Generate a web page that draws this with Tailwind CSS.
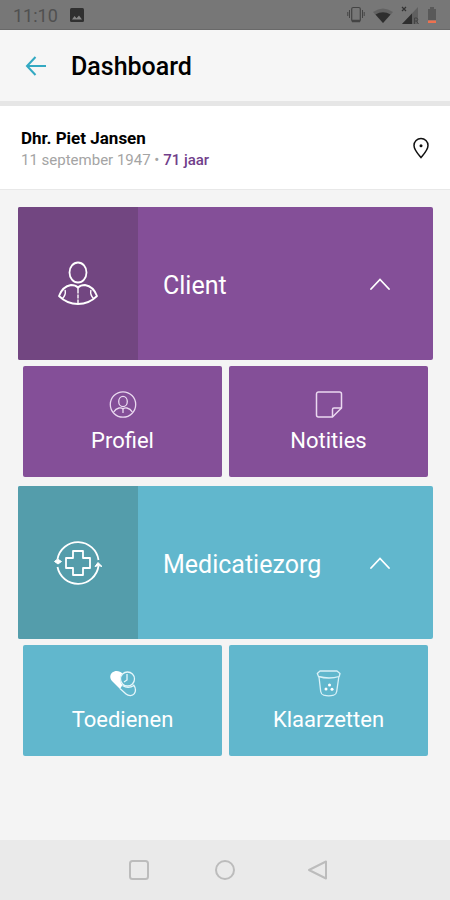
<!DOCTYPE html>
<html lang="nl">
<head>
<meta charset="utf-8">
<meta name="viewport" content="width=device-width, initial-scale=1">
<title>Dashboard</title>
<script src="https://cdn.jsdelivr.net/npm/@tailwindcss/browser@4"></script>
</head>
<body class="flex min-h-screen flex-col bg-[#f4f4f4] font-[Roboto,sans-serif] text-black">

  <!-- Status bar -->
  <div class="flex h-[30px] items-center justify-between border-b border-[#696969] bg-[#777777] px-[13px] text-[#505050]">
    <div class="flex items-center gap-3">
      <span class="pt-[2px] text-[18px] leading-5">11:10</span>
      <svg class="size-[14px]" viewBox="0 0 14 14" aria-hidden="true"><rect width="14" height="14" rx="1.5" fill="#303030"/><path d="M2 11.5 4.5 8l2 2.2L9 7.500l3 4z" fill="#858585"/></svg>
    </div>
    <div class="flex items-center gap-2">
      <svg class="h-[18px] w-[18px]" viewBox="0 0 18 18" fill="none" stroke="#444" aria-hidden="true"><rect x="4.700" y="1.500" width="8.600" height="14" rx="1.500" stroke-width="1.200"/><path d="M5 15h8" stroke-width="2.500"/><path d="M2.500 4v8M.8 6v4M15.500 4v8M17.200 6v4" stroke-width="1"/></svg>
      <svg class="h-[18px] w-5" viewBox="0 0 20 18" aria-hidden="true"><path d="M0 6Q10-1 20 6L10 17z" fill="#626262"/><path d="M2.500 8.500Q10 4 17.500 8.500L10 17z" fill="#2e2e2e"/></svg>
      <svg class="h-5 w-[18px]" viewBox="0 0 18 20" aria-hidden="true"><path d="M17 2v17H1z" fill="#606060"/><path d="M11 8.500V19H1z" fill="#2e2e2e"/><path d="m1 2 4 4m0-4L1 6" stroke="#333" stroke-width="1.200"/><path d="M13.500 19v-6h2.500q1.500 1.500 0 3h-2.500m2 0 2 3" fill="none" stroke="#454545"/></svg>
      <svg class="h-[18px] w-[10px]" viewBox="0 0 10 18" aria-hidden="true"><path d="M3 1h4v2h2v11H1V3h2z" fill="#595959"/><path d="M1 14.500h8V17H1z" fill="#ee714f"/></svg>
    </div>
  </div>

  <!-- App bar -->
  <header class="flex h-[76px] items-center gap-6 border-b-[5px] border-[#e6e6e6] bg-[#f6f6f6] pl-[25px]">
    <button type="button" aria-label="Terug" class="text-[#33a9c2]">
      <svg class="size-[22px]" viewBox="0 0 22 22" fill="none" stroke="currentColor" stroke-width="2" aria-hidden="true"><path d="M10.500 2 2 11l8.500 9M2 11h19"/></svg>
    </button>
    <h1 class="pt-[3px] text-[25px] leading-8 font-medium">Dashboard</h1>
  </header>

  <!-- Client summary -->
  <section class="flex h-[84px] items-center justify-between border-b border-[#e8e8e8] bg-white pr-5 pl-[21px]">
    <div>
      <h2 class="text-[17px] leading-6 font-bold">Dhr. Piet Jansen</h2>
      <p class="text-[15px] leading-5 text-[#a4a4a4]">11 september 1947 <span>•</span> <span class="font-medium text-[#71408a]">71 jaar</span></p>
    </div>
    <button type="button" aria-label="Locatie">
      <svg class="h-[22px] w-[18px]" viewBox="0 0 18 22" fill="none" stroke="#111" stroke-width="1.500" aria-hidden="true"><path d="M9 20.500C6.500 17.500 2 13 2 8.500a7 7 0 0 1 14 0C16 13 11.500 17.500 9 20.500z"/><circle cx="9" cy="8.700" r="1.500" fill="#111" stroke="none"/></svg>
    </button>
  </section>

  <main class="flex grow flex-col gap-[9px] px-[17px] pt-[17px] pl-[18px] text-white">
    <section>
      <button type="button" aria-expanded="true" class="flex h-[153px] w-full items-stretch rounded-xs bg-[#844f98] text-left">
        <span class="flex w-[120px] items-center justify-center rounded-l-xs bg-[#724681]">
          <svg class="size-12" viewBox="0 0 48 48" fill="none" stroke="#fff" stroke-width="1.800" stroke-linejoin="round" stroke-linecap="round" aria-hidden="true"><ellipse cx="24" cy="12.500" rx="8.500" ry="10"/><path d="M24 27.500c-1.500-1.500-4-2.500-7-2.500C11 26 7 30.500 5 36c5 5 11.500 8 19 8s14-3 19-8c-2-5.500-6-10-12-11-3 0-5.500 1-7 2.500z"/><path d="M24 28v5m0 2v3m0 2v3M8.500 38.500c2-2 3.200-5 2.700-8M39.500 38.500c-2-2-3.200-5-2.700-8" stroke-width="1.400"/></svg>
        </span>
        <span class="flex grow items-center justify-between pr-[43px] pl-[25px]">
          <span class="pt-1 text-[25px] leading-8">Client</span>
          <svg class="h-[14px] w-5" viewBox="0 0 20 14" fill="none" stroke="#fff" stroke-width="1.800" stroke-linecap="round" aria-hidden="true"><path d="m1 12 9-9.500 9 9.500"/></svg>
        </span>
      </button>
      <div class="mt-[6px] grid grid-cols-2 gap-[7px] px-[5px]">
        <button type="button" class="flex h-[111px] flex-col items-center justify-center gap-[7px] rounded-xs bg-[#844f98] pt-[3px]">
          <svg class="size-7" viewBox="0 0 28 28" fill="none" stroke="#ead9f0" stroke-width="1.300" aria-hidden="true"><circle cx="14" cy="14.500" r="12.700"/><ellipse cx="14" cy="11.500" rx="4.300" ry="5.200"/><path d="M14 19c-1-1-2.500-1.300-4-1-2.300.5-4 1.800-5.300 4M14 19c1-1 2.500-1.300 4-1 2.300.5 4 1.800 5.300 4M14 19v4"/></svg>
          <span class="text-[22px] leading-8">Profiel</span>
        </button>
        <button type="button" class="flex h-[111px] flex-col items-center justify-center gap-[7px] rounded-xs bg-[#844f98] pt-[3px]">
          <svg class="size-7" viewBox="0 0 28 28" fill="none" stroke="#ead9f0" stroke-width="1.500" stroke-linejoin="round" aria-hidden="true"><path d="M3.500 2h21a2 2 0 0 1 2 2v14l-9 9h-14a2 2 0 0 1-2-2V4a2 2 0 0 1 2-2z"/><path d="M17.500 27v-7.500A1.500 1.500 0 0 1 19 18h7.500"/></svg>
          <span class="text-[22px] leading-8">Notities</span>
        </button>
      </div>
    </section>

    <section>
      <button type="button" aria-expanded="true" class="flex h-[153px] w-full items-stretch rounded-xs bg-[#61b7cd] text-left">
        <span class="flex w-[120px] items-center justify-center rounded-l-xs bg-[#549dab]">
          <svg class="size-12" viewBox="0 0 48 48" fill="none" stroke="#fff" stroke-width="1.800" stroke-linejoin="round" aria-hidden="true"><path d="M3.500 20a20.800 20.800 0 0 1 41 1M44.500 27a20.800 20.800 0 0 1-41 1"/><path d="M19 12h10v7h7v10h-7v7H19v-7h-7V19h7z"/><path d="M.5 22.500 3.500 20l4 2.500L4 25zM41 27.500l3-4 4 4-3.500-1z" fill="#fff" stroke-width="1"/></svg>
        </span>
        <span class="flex grow items-center justify-between pr-[43px] pl-[25px]">
          <span class="pt-1 text-[25px] leading-8">Medicatiezorg</span>
          <svg class="h-[14px] w-5" viewBox="0 0 20 14" fill="none" stroke="#fff" stroke-width="1.800" stroke-linecap="round" aria-hidden="true"><path d="m1 12 9-9.500 9 9.500"/></svg>
        </span>
      </button>
      <div class="mt-[6px] grid grid-cols-2 gap-[7px] px-[5px]">
        <button type="button" class="flex h-[111px] flex-col items-center justify-center gap-[7px] rounded-xs bg-[#61b7cd] pt-[3px]">
          <svg class="size-7" viewBox="0 0 28 28" fill="none" stroke="#e6f6fa" stroke-width="1.300" aria-hidden="true"><path d="M13.500 4.500C11 1.500 6 1 3.200 3.500.5 6 .8 9.500 3 12l8 8 2.500-4C10.500 12.500 10.500 8 13.500 4.500z" fill="#fff" stroke="none"/><circle cx="18.500" cy="10" r="7"/><path d="M18 5v6l-3 2M11 19.500l6 5.500c2.500 2.200 6.500 2.200 8.300-.3 1.700-2.500 1.500-5.700-.8-9M13.500 16.500c3 2 7.500 2.500 11.500 0"/></svg>
          <span class="text-[22px] leading-8">Toedienen</span>
        </button>
        <button type="button" class="flex h-[111px] flex-col items-center justify-center gap-[7px] rounded-xs bg-[#61b7cd] pt-[3px]">
          <svg class="size-7" viewBox="0 0 28 28" fill="none" stroke="#d9f1f7" stroke-width="1.300" stroke-linejoin="round" aria-hidden="true"><path d="M5 2h17l3 2.500-.8 3C18.500 9.200 9.500 9.200 3.500 7.500l-1.200-3z"/><path d="m4 8 1.700 14.500c.3 2 1.500 3.200 3 3.700 3 .9 7 .9 10 0 1.500-.5 2.700-1.700 3-3.700L23.800 8"/><g fill="#fff" stroke="none"><circle cx="14.500" cy="16" r="1.500"/><circle cx="11" cy="20" r="1.500"/><circle cx="17" cy="20.300" r="1.500"/></g></svg>
          <span class="text-[22px] leading-8">Klaarzetten</span>
        </button>
      </div>
    </section>
  </main>

  <!-- System navigation -->
  <nav class="flex h-[60px] items-center justify-center gap-16 bg-[#eaeaea] pl-[6px] text-[#bcbcbc]" aria-label="Systeem">
    <button type="button" aria-label="Recent"><svg class="size-[22px]" viewBox="0 0 22 22" fill="none" stroke="currentColor" stroke-width="2" aria-hidden="true"><rect x="2" y="2" width="18" height="18" rx="2.500"/></svg></button>
    <button type="button" aria-label="Start" class="mr-[6px]"><svg class="size-[22px]" viewBox="0 0 22 22" fill="none" stroke="currentColor" stroke-width="2" aria-hidden="true"><circle cx="11" cy="11" r="9"/></svg></button>
    <button type="button" aria-label="Terug"><svg class="size-[22px]" viewBox="0 0 22 22" fill="none" stroke="currentColor" stroke-width="2" stroke-linejoin="round" aria-hidden="true"><path d="M20 2.500v17L3 11z"/></svg></button>
  </nav>
</body>
</html>
